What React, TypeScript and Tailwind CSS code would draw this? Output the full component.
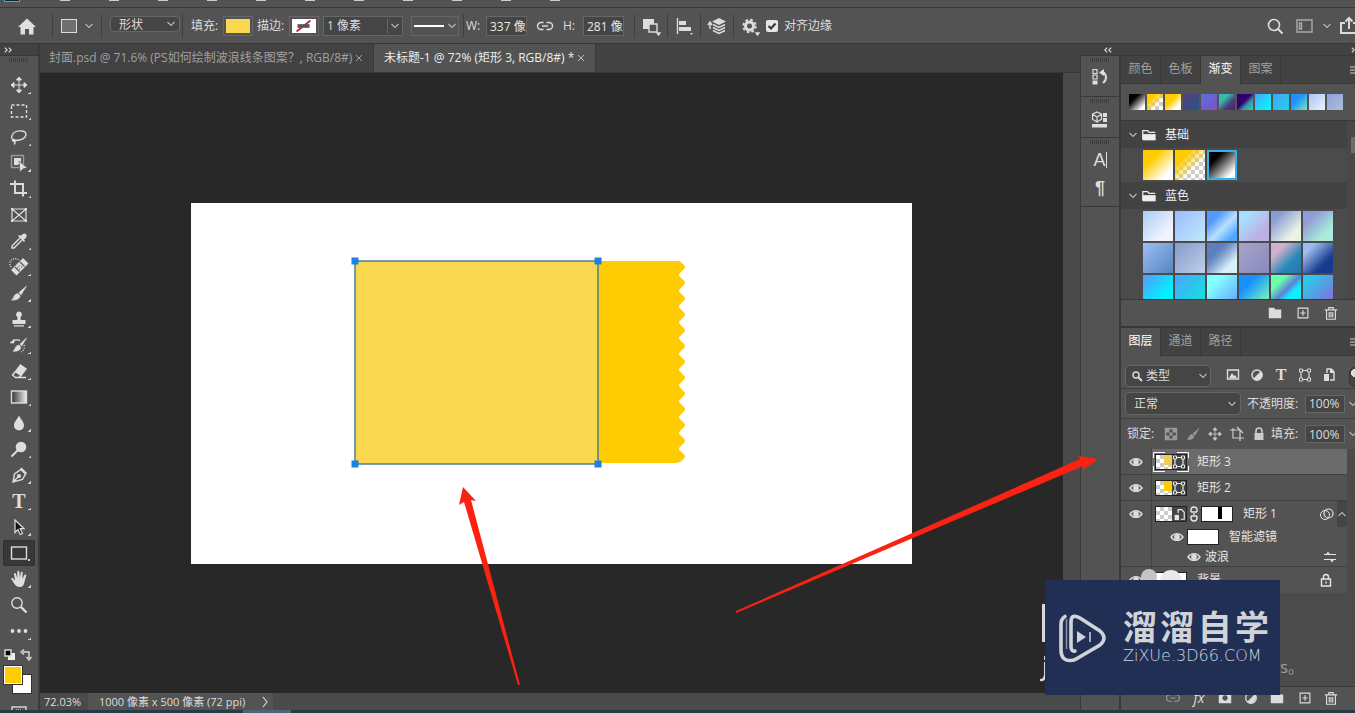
import type { ReactNode } from "react";
import clsx from "clsx";

type IconProps = { children: ReactNode; className?: string; box?: string };

function Icon({ children, className = "size-5", box = "0 0 20 20" }: IconProps) {
  return (
    <svg
      viewBox={box}
      className={clsx("shrink-0", className)}
      fill="none"
      stroke="currentColor"
      strokeWidth="1.4"
      aria-hidden="true"
    >
      {children}
    </svg>
  );
}

function Chevron({ className = "" }: { className?: string }) {
  return (
    <Icon box="0 0 8 8" className={clsx("pointer-events-none size-2 text-[#b8b8b8]", className)}>
      <path d="M.5 2 4 5.5 7.5 2" strokeWidth="1.1" />
    </Icon>
  );
}

function Grip() {
  return (
    <div className="mx-auto h-1 w-5 shrink-0 bg-[repeating-linear-gradient(90deg,#3e3e3e_0_1px,transparent_1px_2px)]" />
  );
}

function Divider() {
  return <div className="h-6 w-px shrink-0 bg-[#404040]" />;
}

const moveIcon = (
  <path
    d="M10 4v12M4 10h12M10 2 7.5 5h5zM10 18l-2.500-3h5zM2 10l3-2.500v5zM18 10l-3-2.500v5z"
    fill="currentColor"
    strokeWidth="1"
  />
);

const folderIcon = <path d="M2 3h6l1.500 2H16v10H2z" fill="currentColor" stroke="none" />;

const trashIcon = <path d="M2 5.500h14M6.500 5.500V3h5v2.500M4 6v10h10V6M7 8v6M9 8v6M11 8v6" strokeWidth="1.300" />;

const newIcon = <path d="M3.500 3.500h11v11h-11zM9 6v6M6 9h6" strokeWidth="1.300" />;

const tools: { name: string; icon: ReactNode; more?: boolean }[] = [
  { name: "移动工具", icon: moveIcon, more: true },
  { name: "矩形选框工具", icon: <rect x="2.500" y="4" width="15" height="12" strokeDasharray="3 2" />, more: true },
  {
    name: "套索工具",
    icon: (
      <path d="M6 13.500C3 13 2 11 3 8.500 4.500 5 9 3.500 13 4c4 .5 5 3 3 6-2 2.500-6 3.500-10 3.500zM6 13c-2-1-3 0-2 1s2 .5 2.500-.5M6 14c.5 1.500 0 2.500-1 3.500" />
    ),
    more: true,
  },
  {
    name: "对象选择工具",
    icon: (
      <>
        <rect x="2.500" y="2.500" width="12" height="12" strokeDasharray="1 1" />
        <path d="M5 5h7v4l-3 3H5z" fill="currentColor" stroke="none" />
        <path d="m10 8 8.500 7-4 .5-3.500 3.500z" fill="currentColor" stroke="#535353" strokeWidth=".6" />
      </>
    ),
    more: true,
  },
  { name: "裁剪工具", icon: <path d="M6 1.500V14h12M1 5h4m2 0h7v12.500" strokeWidth="1.900" />, more: true },
  {
    name: "图框工具",
    icon: (
      <>
        <path d="M3 4h14v12H3zM3 4l14 12M17 4 3 16" strokeWidth="1.200" />
        <path d="M2 3h2v2H2zM16 3h2v2h-2zM2 15h2v2H2zM16 15h2v2h-2z" fill="currentColor" stroke="none" />
      </>
    ),
  },
  {
    name: "吸管工具",
    icon: (
      <>
        <path d="m11 7-8 8v2h2l8-8" />
        <path d="m9 5 6 6 1-1-1-1.500c3-2 3-4 2-5.200s-3-1-5 1.700L10.500 4z" fill="currentColor" stroke="none" />
      </>
    ),
    more: true,
  },
  {
    name: "污点修复画笔工具",
    icon: (
      <>
        <path d="M2 10a4.500 4.500 0 0 1 8-6.500" strokeDasharray="1 1.300" />
        <path d="m14 2 4.500 4.500-11 11L3 13z" fill="currentColor" strokeLinejoin="round" />
        <path d="m11 5 4.500 4.500M6 10l4.500 4.500" stroke="#535353" strokeWidth="1.200" />
        <path d="M10.500 8.500v.8M12 10h.8M8.500 10.300h.8M10.300 12h.8" stroke="#535353" />
      </>
    ),
    more: true,
  },
  {
    name: "画笔工具",
    icon: (
      <path
        d="M17.500 3 10 9.500l2 2.500zM9 10.500l2.200 2.500c-.7 3-4 4.500-8.700 4 2.500-1 1.800-6 6.500-6.500z"
        fill="currentColor"
        stroke="currentColor"
        strokeWidth=".6"
      />
    ),
    more: true,
  },
  {
    name: "仿制图章工具",
    icon: (
      <path
        d="M10 2.500a3 3 0 0 1 2 5.200c-.8.800-.5 2.800 0 3.300h4.500v4h-13v-4H8c.5-.5.8-2.500 0-3.300a3 3 0 0 1 2-5.200zM5 16.200h10v1.300H5z"
        fill="currentColor"
        stroke="none"
      />
    ),
    more: true,
  },
  {
    name: "历史记录画笔工具",
    icon: (
      <>
        <path
          d="m17.500 3-6.500 6 1.700 2zM10 10l2 2.200c-.6 3-3.500 4.500-8 4 2.500-1 1.500-5.500 6-6.200zM1 8l4-3.500V8z"
          fill="currentColor"
          strokeWidth=".6"
        />
        <path d="M4 6c2-1.500 4-1.500 7-.5" />
        <path d="M15 10c1 3 0 5-3 7" strokeDasharray="1 1.500" />
      </>
    ),
    more: true,
  },
  {
    name: "橡皮擦工具",
    icon: (
      <>
        <path d="m11.500 4 5.500 4-5 6.500-5.500-4z" fill="currentColor" />
        <path d="m6.500 10.500-3 3.500 3 2.500h3.500l2-2M6 16.500h11" />
      </>
    ),
    more: true,
  },
  {
    name: "渐变工具",
    icon: (
      <>
        <defs>
          <linearGradient id="toolGradient">
            <stop stopColor="#333" />
            <stop offset="1" stopColor="#eee" />
          </linearGradient>
        </defs>
        <rect x="2.500" y="4" width="15" height="12" fill="url(#toolGradient)" />
      </>
    ),
    more: true,
  },
  {
    name: "模糊工具",
    icon: <path d="M10 2.500c2 4 5 6.500 5 10a5 5 0 0 1-10 0c0-3.500 3-6 5-10z" fill="currentColor" stroke="none" />,
    more: true,
  },
  {
    name: "减淡工具",
    icon: (
      <>
        <circle cx="12" cy="8" r="5.300" fill="currentColor" stroke="none" />
        <path d="m9 11-6.500 6.500" strokeWidth="2" />
      </>
    ),
    more: true,
  },
  {
    name: "钢笔工具",
    icon: (
      <>
        <path d="m12 4.500 4.500 4.500-3 5.500L4 17l1.500-8zM4 17l5-5" />
        <path d="m12.500 2.500 5.500 5.500-1.500 1.500L11 4z" fill="currentColor" stroke="none" />
        <circle cx="10" cy="11" r="1.300" fill="currentColor" />
      </>
    ),
    more: true,
  },
  { name: "横排文字工具", icon: "T", more: true },
  {
    name: "路径选择工具",
    icon: <path d="M6 3v12.500l3-3 2.200 5 2.300-1-2.300-4.800H15z" fill="#111" strokeWidth="1.200" />,
    more: true,
  },
  { name: "矩形工具", icon: <rect x="2.500" y="4" width="15" height="12" />, more: true },
  {
    name: "抓手工具",
    icon: (
      <path
        d="M2 9.500c1-1 2.300-.3 4 2L5 5c0-1.400 1.600-1.500 2 0l1.200 4.500L8.300 2.800c.1-1.300 1.800-1.300 2 0l.6 6.500.9-5.800c.3-1.300 1.900-1 1.900.3l-.3 6.200 2-4c.6-1.100 2.100-.5 1.800.7L15.700 12c-.5 4-2 6-5 6-4 0-5.500-3.500-8.700-8.500z"
        fill="currentColor"
        stroke="none"
      />
    ),
    more: true,
  },
  {
    name: "缩放工具",
    icon: (
      <>
        <circle cx="8" cy="8" r="5.200" />
        <path d="m12 12 5.500 5.500" strokeWidth="2.400" />
      </>
    ),
  },
  {
    name: "编辑工具栏",
    icon: (
      <>
        <circle cx="3.500" cy="10" r="1.900" fill="currentColor" stroke="none" />
        <circle cx="10" cy="10" r="1.900" fill="currentColor" stroke="none" />
        <circle cx="16.500" cy="10" r="1.900" fill="currentColor" stroke="none" />
      </>
    ),
    more: true,
  },
];

const recentSwatches = [
  "bg-[linear-gradient(135deg,#000_30%,#fff_85%)]",
  "bg-[linear-gradient(135deg,#fc0_30%,transparent_70%),conic-gradient(#ccc_25%,#fff_0_50%,#ccc_0_75%,#fff_0)] bg-[size:auto,8px_8px]",
  "bg-[linear-gradient(135deg,#fc0_40%,#fff_80%)]",
  "bg-[linear-gradient(135deg,#554080,#28557f)]",
  "bg-[linear-gradient(135deg,#5a6fe0,#8050c0)]",
  "bg-[linear-gradient(135deg,#35bcae_30%,#4d3a7a_65%,#502078)]",
  "bg-[linear-gradient(135deg,#30006c_45%,#3a8fa8_65%,#38d0b0)]",
  "bg-[linear-gradient(135deg,#4aa4ff,#0ff)]",
  "bg-[linear-gradient(135deg,#42a5f8,#20d0ea)]",
  "bg-[linear-gradient(135deg,#1e90ff_35%,#6fe8c0)]",
  "bg-[linear-gradient(135deg,#a8c6f4,#e8f2ff)]",
  "bg-[linear-gradient(135deg,#8f9fd8,#aebfda)]",
];

const basicSwatches = [
  "bg-[linear-gradient(135deg,#fc0_30%,#fff_80%)]",
  "bg-[linear-gradient(135deg,#fc0_25%,transparent_65%),conic-gradient(#ccc_25%,#fff_0_50%,#ccc_0_75%,#fff_0)] bg-[size:auto,8px_8px]",
  "border-2 border-[#30b5e8] bg-[linear-gradient(135deg,#000_25%,#fff_85%)]",
];

const blueSwatches = [
  "bg-[linear-gradient(135deg,#a9ccf4,#f0f2ff_75%)]",
  "bg-[linear-gradient(135deg,#9bbcff,#bfe9fb)]",
  "bg-[linear-gradient(135deg,#529aff_25%,#b8e0ff_55%,#52a8ff_85%)]",
  "bg-[linear-gradient(135deg,#a8dfff_20%,#bcb0e4_75%)]",
  "bg-[linear-gradient(135deg,#8a9cd4_20%,#e8f3e4_75%)]",
  "bg-[linear-gradient(135deg,#929cd6_25%,#a9ecdc_75%)]",
  "bg-[linear-gradient(135deg,#9fbef4,#5486c0)]",
  "bg-[linear-gradient(135deg,#8799cc,#bdd0e8)]",
  "bg-[linear-gradient(135deg,#5c7fc0_30%,#7e9acc_45%,#d8f0fa_75%)]",
  "bg-[linear-gradient(135deg,#a8a4c6,#8888c0)]",
  "bg-[linear-gradient(135deg,#d2b0cc_25%,#2688b8_65%,#2878a8)]",
  "bg-[linear-gradient(135deg,#9fbcee_20%,#173c8f_70%)]",
  "bg-[linear-gradient(135deg,#4ba4ff_10%,#00f2ff_70%)]",
  "bg-[linear-gradient(135deg,#4ba4ff,#1cd8e0_75%)]",
  "bg-[linear-gradient(135deg,#84ffff_25%,#60a0ff)]",
  "bg-[linear-gradient(135deg,#1690ff_30%,#71edc0_85%)]",
  "bg-[linear-gradient(135deg,#6dffac_25%,#6080d8_50%,#10edff_65%)]",
  "bg-[linear-gradient(135deg,#30c5ea_20%,#8070d8_90%)]",
];

const checker = "bg-[conic-gradient(#ccc_25%,#fff_0_50%,#ccc_0_75%,#fff_0)] bg-[size:8px_8px]";

function SelectBox({ label, value, className }: { label: string; value: string; className: string }) {
  return (
    <div className={clsx("relative flex shrink-0 items-center rounded-sm border border-[#666] bg-[#454545]", className)}>
      <select aria-label={label} className="size-full appearance-none bg-transparent pl-2 outline-none">
        <option>{value}</option>
      </select>
      <Chevron className="absolute right-1" />
    </div>
  );
}

function NumberBox({ label, value, className }: { label: string; value: string; className: string }) {
  return (
    <input
      aria-label={label}
      defaultValue={value}
      className={clsx("shrink-0 border border-[#666] bg-[#454545] pl-[3px] text-[#e8e8e8] outline-none", className)}
    />
  );
}

function OptionsBar() {
  return (
    <header className="flex h-9 shrink-0 items-center overflow-hidden border-b border-[#383838] pt-px">
      <button aria-label="主页" className="ml-[15px] mr-[13px] text-[#e0e0e0]">
        <Icon className="size-6" box="0 0 24 24">
          <path d="M3 13 12 4.500 21 13h-2.500v7.500H14V15h-4v5.500H5.500V13z" fill="currentColor" stroke="none" />
        </Icon>
      </button>
      <Divider />
      <button aria-label="工具预设" className="mx-2 flex w-8 items-center justify-between">
        <span className="h-3.5 w-4 border border-[#ddd] bg-[#707070]" />
        <Chevron />
      </button>
      <Divider />
      <SelectBox label="工具模式" value="形状" className="mb-1 ml-2 mr-0.5 h-4 w-[70px]" />
      <Divider />
      <span className="ml-2 w-8 shrink-0">填充:</span>
      <button aria-label="填充颜色" className="mr-1 h-5 w-[30px] shrink-0 border border-[#666] p-0.5">
        <span className="block size-full bg-[#f9d74f]" />
      </button>
      <span className="w-8 shrink-0">描边:</span>
      <button aria-label="描边颜色" className="h-5 w-[30px] shrink-0 border border-[#666] p-0.5">
        <Icon className="h-full w-full bg-white" box="0 0 26 14">
          <path d="M5 13 20 1" stroke="#c8202f" strokeWidth="2" />
          <path d="M6 5h13v4H6z" fill="#555" stroke="none" />
        </Icon>
      </button>
      <div className="ml-1 mr-2 flex h-5 w-20 shrink-0 items-center border border-[#666] bg-[#454545]">
        <input aria-label="描边宽度" defaultValue="1 像素" className="w-16 border-r border-[#666] pl-[3px] outline-none" />
        <Chevron className="mx-auto" />
      </div>
      <button aria-label="描边样式" className="mr-1 flex h-5 w-12 shrink-0 items-center justify-between border border-[#666] px-0.5">
        <span className="h-0.5 w-[30px] bg-white" />
        <Chevron />
      </button>
      <Divider />
      <span className="w-[22px] shrink-0 pl-0.5">W:</span>
      <NumberBox label="宽度" value="337 像素" className="h-5 w-[41px]" />
      <button aria-label="链接宽高" className="mx-2">
        <Icon className="size-5">
          <path d="M8.500 6.500H6a3.500 3.500 0 0 0 0 7h2.500M11.500 6.500H14a3.500 3.500 0 0 1 0 7h-2.500M7 10h6" />
        </Icon>
      </button>
      <span className="w-5 shrink-0">H:</span>
      <NumberBox label="高度" value="281 像素" className="mr-2.5 h-5 w-[41px]" />
      <Divider />
      <button aria-label="路径操作" className="mx-1.5">
        <Icon>
          <path d="M2 3h11v10H2z" fill="currentColor" stroke="none" />
          <path d="M8 8h8v8H8z" fill="#535353" />
          <path d="M16 17h3l-1.500 2z" fill="currentColor" />
        </Icon>
      </button>
      <Divider />
      <button aria-label="路径对齐方式" className="mx-1.5">
        <Icon>
          <path d="M3.500 2v16" />
          <path d="M5 5h7v4H5zM5 11h12v4H5zM16 17h3l-1.500 2z" fill="currentColor" stroke="none" />
        </Icon>
      </button>
      <Divider />
      <button aria-label="路径排列方式" className="mx-1.5">
        <Icon>
          <path d="M3 13V7M1 9l2-3 2 3" />
          <path d="m12 2 7 3.500L12 9 5 5.500z" fill="currentColor" stroke="none" />
          <path d="m6 8.500 6 3 6-3M6 11.500l6 3 6-3M6 14.500l6 3 6-3" />
        </Icon>
      </button>
      <Divider />
      <button aria-label="其他选项" className="ml-1.5 mr-1.5">
        <Icon>
          <circle cx="9.500" cy="10" r="4" strokeWidth="3" />
          <circle cx="9.500" cy="10" r="6.200" strokeWidth="2" strokeDasharray="2.600 2.270" />
          <path d="M16 17h3l-1.500 2z" fill="currentColor" />
        </Icon>
      </button>
      <label className="flex shrink-0 items-center gap-1.5">
        <span className="relative size-3">
          <input type="checkbox" defaultChecked className="block size-3 appearance-none rounded-xs bg-[#e6e6e6]" />
          <Icon box="0 0 12 12" className="pointer-events-none absolute inset-0 size-3 text-[#333]">
            <path d="m2.500 6 2.500 2.500 4.500-5" strokeWidth="2" />
          </Icon>
        </span>
        对齐边缘
      </label>
      <div className="ml-auto flex shrink-0 items-center">
        <button aria-label="搜索" className="mr-2.5">
          <Icon>
            <circle cx="9" cy="9" r="5.500" strokeWidth="1.600" />
            <path d="m13 13 4.500 4.500" strokeWidth="2" />
          </Icon>
        </button>
        <button aria-label="工作区" className="flex items-center gap-2">
          <Icon className="size-5 text-[#aaa]">
            <path d="M2 4h15v12H2zM4.500 7h2v6h-2z" />
          </Icon>
          <Chevron className="text-[#666]" />
        </button>
        <button aria-label="共享" className="-mr-1 ml-2 w-5">
          <Icon>
            <path d="M6 7H2v10h16V7h-4M10 13V2M6.500 5.500 10 2l3.500 3.500" strokeWidth="2" />
          </Icon>
        </button>
      </div>
    </header>
  );
}

function Toolbar() {
  return (
    <aside className="flex w-10 shrink-0 flex-col border-r-2 border-[#3a3a3a] bg-[#535353]">
      <button aria-label="展开工具栏" className="h-3 shrink-0 border-b border-[#383838] bg-[#424242] pl-1">
        <Icon box="0 0 10 10" className="size-2">
          <path d="m1 2 3 3-3 3M6 2l3 3-3 3" />
        </Icon>
      </button>
      <div className="flex h-4 shrink-0 items-start pt-0.5">
        <Grip />
      </div>
      {tools.map((tool) => (
        <button
          key={tool.name}
          aria-label={tool.name}
          className={clsx(
            "relative mx-[3px] flex h-[26px] shrink-0 items-center justify-center text-[#dedede]",
            tool.name === "矩形工具" && "rounded-xs border border-[#303030] bg-[#383838]"
          )}
        >
          {tool.icon === "T" ? (
            <span className="font-['Liberation_Serif',serif] text-xl font-bold">T</span>
          ) : (
            <Icon>{tool.icon}</Icon>
          )}
          {tool.more && (
            <span className="absolute bottom-1 right-1 size-[3px] bg-[linear-gradient(135deg,transparent_50%,#ccc_50%)]" />
          )}
        </button>
      ))}
      <div className="flex h-5 shrink-0 items-center justify-between px-1 pt-0.5">
        <Icon box="0 0 12 12" className="size-3">
          <path d="M4 4h7v7H4z" fill="#eee" stroke="none" />
          <path d="M1 1h6v6H1z" fill="#000" />
        </Icon>
        <Icon box="0 0 12 12" className="mr-0.5 size-3">
          <path d="M3 3h6v6M4 .5 1 3l3 2.500M6.500 8 9 11l2.500-3" />
        </Icon>
      </div>
      <div className="relative mt-0.5 h-8 shrink-0">
        <button aria-label="背景色" className="absolute left-3 top-2 size-5 border border-[#333] bg-white" />
        <button aria-label="前景色" className="absolute left-1 top-0 size-[18px] border border-white bg-[#fc0] outline outline-[#333]" />
      </div>
      <div className="mt-2 flex justify-center">
        <Icon className="h-3 w-4" box="0 0 16 12">
          <rect x="1" y="1" width="14" height="11" />
          <path d="M5 4h6" strokeDasharray="1 1" />
        </Icon>
      </div>
    </aside>
  );
}

// pinking-shear edge of the big shape, one tooth per 15.8px
const teeth = Array.from({ length: 13 }, (_, i) => {
  const y = 64 + i * 15.8;
  return i < 12
    ? `L493 ${y - 2} Q495 ${y} 493 ${y + 2} L489 ${y + 6} Q487 ${y + 7.9} 489 ${y + 9.8}`
    : `L493 ${y - 2} Q495 ${y} 493 ${y + 2} L490 ${y + 5} Q488 260 484 260`;
}).join(" ");

function Workspace() {
  return (
    <main className="flex min-w-0 flex-1 flex-col bg-[#4a4a4a]">
      <div role="tablist" className="flex h-[29px] shrink-0 overflow-hidden border-b border-[#383838] bg-[#424242] pl-px">
        <div className="flex w-[333px] shrink-0 items-center whitespace-nowrap border-r border-[#383838] pl-2 text-[#a0a0a0]">
          <button role="tab">封面.psd @ 71.6% (PS如何绘制波浪线条图案？, RGB/8#)</button>
          <button aria-label="关闭封面" className="ml-auto mr-2.5">
            <Icon box="0 0 8 8" className="size-2">
              <path d="m1 1 6 6M7 1 1 7" strokeWidth="1" />
            </Icon>
          </button>
        </div>
        <div className="flex w-[222px] shrink-0 items-center whitespace-nowrap border-r border-[#383838] bg-[#535353] pl-2.5 text-[#eee]">
          <button role="tab">未标题-1 @ 72% (矩形 3, RGB/8#) *</button>
          <button aria-label="关闭未标题-1" className="ml-auto mr-2.5 text-[#bbb]">
            <Icon box="0 0 8 8" className="size-2">
              <path d="m1 1 6 6M7 1 1 7" strokeWidth="1" />
            </Icon>
          </button>
        </div>
      </div>
      <div className="mr-[17px] flex min-h-0 flex-1 items-center justify-center overflow-hidden bg-[#282828]">
        <svg viewBox="0 0 721 361" className="h-[361px] w-[721px] shrink-0 bg-white" role="img" aria-label="画布">
          <path d={`M164 58 H487 Q489 58 491 60 ${teeth} H164 Z`} fill="#ffcc03" />
          <rect x="164" y="58" width="243" height="203" fill="#f9d74f" stroke="#4c7d92" strokeWidth="1.500" />
          <path
            d="M160.500 54.500h7v7h-7zM403.500 54.500h7v7h-7zM160.500 257.500h7v7h-7zM403.500 257.500h7v7h-7z"
            fill="#1b82e2"
          />
        </svg>
      </div>
      <footer className="flex h-[17px] shrink-0 items-center bg-[#4a4a4a] text-[11px] leading-4 text-[#ddd]">
        <span className="w-12 pl-1">72.03%</span>
        <span className="flex h-full items-center gap-4 bg-[#535353] pl-[11px] pr-1">
          1000 像素 x 500 像素 (72 ppi)
          <Icon box="0 0 8 12" className="h-3 w-2">
            <path d="m2 1 4 5-4 5" strokeWidth="1.100" />
          </Icon>
        </span>
      </footer>
    </main>
  );
}

function Dock() {
  return (
    <div className="flex min-h-0 w-10 shrink-0 flex-col border-x border-[#3a3a3a] bg-[#535353] pt-0.5 text-[#dedede]">
      <div className="flex h-[39px] shrink-0 flex-col border-b border-[#383838] pb-1">
        <Grip />
        <button aria-label="历史记录" className="m-auto">
          <Icon>
            <path d="M3 2.500h4v4H3zM3 8h4v4H3z" strokeWidth="1.200" />
            <path d="M2.500 13.500h5v4h-5zM9 5.500 14 2v7z" fill="currentColor" stroke="none" />
            <path d="M13 5c4 3 4 8 0 11" strokeWidth="2" />
          </Icon>
        </button>
      </div>
      <div className="flex h-[41px] shrink-0 flex-col border-b border-[#383838] pt-0.5">
        <Grip />
        <button aria-label="属性" className="m-auto">
          <Icon>
            <path d="m7 2 4.500 2.200v5L7 12 2.500 9.200v-5zM2.500 4.200 7 7l4.500-2.800M7 7v5" strokeWidth="1.200" />
            <path d="M13 3h4v4h-4zM13 8h4v4h-4zM2 14h15v3.500H2z" fill="currentColor" stroke="none" />
          </Icon>
        </button>
      </div>
      <div className="flex h-[69px] shrink-0 flex-col items-center border-b border-[#383838] pt-0.5">
        <Grip />
        <button aria-label="字符" className="mt-0.5 flex h-7 items-center font-['Liberation_Sans',sans-serif] text-lg">
          A<span className="h-4 w-px bg-[#dedede]" />
        </button>
        <button aria-label="段落" className="h-7 font-['Liberation_Sans',sans-serif] text-lg font-bold leading-7">
          ¶
        </button>
      </div>
    </div>
  );
}

function PanelTabs({ tabs, active }: { tabs: string[]; active: string }) {
  return (
    <div role="tablist" className="flex h-7 shrink-0 border-b border-[#383838] bg-[#424242]">
      {tabs.map((tab) => (
        <button
          key={tab}
          role="tab"
          aria-selected={tab === active}
          className={clsx(
            "-mb-px h-7 w-10 shrink-0 border-r border-[#383838] pb-0.5",
            tab === active ? "bg-[#535353] text-white" : "border-b text-[#a0a0a0]"
          )}
        >
          {tab}
        </button>
      ))}
      <button aria-label="面板菜单" className="ml-auto -mr-1 pr-px text-[#ccc]">
        <Icon box="0 0 8 8" className="size-2">
          <path d="M0 1h8M0 4h8M0 7h8" strokeWidth="1" />
        </Icon>
      </button>
    </div>
  );
}

function GroupHeader({ title }: { title: string }) {
  return (
    <button className="flex h-[27px] w-full shrink-0 items-center bg-[#424242] pl-2 text-[#eee]">
      <Chevron className="mr-1" />
      <Icon box="0 0 18 18" className="mr-2 size-4">
        <path d="M2 14V4h5.500L9 6h7" />
        <path d="M2 8h14.500v7H2z" fill="currentColor" stroke="none" />
      </Icon>
      {title}
    </button>
  );
}

function SwatchGrid({ items }: { items: string[] }) {
  return (
    <div className="grid grid-cols-[repeat(6,30px)] gap-0.5 py-0.5 pl-[22px]">
      {items.map((item) => (
        <button key={item} aria-label="渐变预设" className={clsx("size-[30px]", item)} />
      ))}
    </div>
  );
}

function GradientsPanel() {
  return (
    <section className="flex shrink-0 flex-col">
      <PanelTabs tabs={["颜色", "色板", "渐变", "图案"]} active="渐变" />
      <div className="flex h-9 shrink-0 items-center gap-0.5 pl-2">
        {recentSwatches.map((item) => (
          <button key={item} aria-label="最近使用的渐变" className={clsx("size-4 shrink-0", item)} />
        ))}
      </div>
      <div className="flex h-[180px] shrink-0 overflow-hidden border-y border-[#383838] bg-[#4b4b4b]">
        <div className="flex-1">
          <GroupHeader title="基础" />
          <SwatchGrid items={basicSwatches} />
          <GroupHeader title="蓝色" />
          <SwatchGrid items={blueSwatches} />
        </div>
        <div className="flex w-2 flex-col items-end bg-[#484848] pt-4">
          <div className="h-4 w-1 bg-[#6c6c6c]" />
        </div>
      </div>
      <div className="flex h-[26px] items-center justify-end gap-3 pr-4">
        <button aria-label="新建组">
          <Icon box="0 0 18 18" className="size-4">{folderIcon}</Icon>
        </button>
        <button aria-label="新建渐变">
          <Icon box="0 0 18 18" className="size-4">{newIcon}</Icon>
        </button>
        <button aria-label="删除渐变">
          <Icon box="0 0 18 18" className="size-4">{trashIcon}</Icon>
        </button>
      </div>
    </section>
  );
}

function Eye() {
  return (
    <Icon box="0 0 14 14" className="size-3.5 text-[#ddd]">
      <path d="M1 7c3-4.500 9-4.500 12 0-3 4.500-9 4.500-12 0z" />
      <circle cx="7" cy="7" r="2.200" fill="currentColor" />
    </Icon>
  );
}

const shapeBox = (
  <>
    <path d="M4 3.500h8v9H4z" strokeWidth="1.200" />
    <path d="M2.500 2h3v3h-3zM10.500 2h3v3h-3zM2.500 11h3v3h-3zM10.500 11h3v3h-3z" fill="#454545" strokeWidth="1" />
  </>
);

function ShapeThumb({ fill, selected }: { fill: string; selected?: boolean }) {
  return (
    <span className="relative flex h-4 w-8 shrink-0 border border-[#222]">
      <span className={clsx("relative h-full w-4", checker)}>
        <span className={clsx("absolute right-0 top-0 h-2.5 w-2", fill)} />
      </span>
      <Icon box="1 1 14 14" className="h-full w-3.5 bg-[#454545]">
        {shapeBox}
      </Icon>
      {selected && (
        <svg viewBox="0 0 36 20" className="absolute -left-[3px] -top-[3px] h-5 w-9" fill="none" stroke="#fff">
          <path d="M.5 6V.5H12M24 .5h11.500V6M35.500 14v5.500H24M12 19.500H.5V14" />
        </svg>
      )}
    </span>
  );
}

function LayersPanel() {
  return (
    <section className="flex min-h-0 flex-1 flex-col border-t-2 border-[#383838]">
      <PanelTabs tabs={["图层", "通道", "路径"]} active="图层" />
      <div className="flex h-[33px] shrink-0 items-end overflow-hidden border-b border-[#404040] pb-px pl-1">
        <div className="relative flex items-center">
          <Icon box="0 0 12 12" className="pointer-events-none absolute left-1.5 size-3">
            <circle cx="5" cy="5" r="3" />
            <path d="m7.500 7.500 3.500 3.500" strokeWidth="2" />
          </Icon>
          <select
            aria-label="图层过滤"
            className="h-[22px] w-[86px] appearance-none rounded-sm border border-[#666] bg-[#454545] pl-5 outline-none"
          >
            <option>类型</option>
          </select>
          <Chevron className="absolute right-1" />
        </div>
        <div className="ml-3.5 flex h-6 items-center gap-2 text-[#ddd]">
          <Icon box="0 0 16 16" className="size-4">
            <path d="M2.500 3h11v9h-11z" />
            <path d="m4 11 3-5 2 3 1-1 2 3z" fill="currentColor" stroke="none" />
          </Icon>
          <Icon box="0 0 16 16" className="size-4">
            <circle cx="8" cy="8" r="5" />
            <path d="M12 4a5.500 5.500 0 0 1-8 8z" fill="currentColor" stroke="none" />
          </Icon>
          <span className="w-4 text-center font-['Liberation_Serif',serif] text-base font-bold">T</span>
          <Icon box="0 0 16 16" className="size-4">{shapeBox}</Icon>
          <Icon box="0 0 16 16" className="size-4">
            <path d="M6 6V2h4l3 3v8H9" />
            <path d="M3 7h5v7H3zM9 2h2l2 2v2H9z" fill="currentColor" stroke="none" />
          </Icon>
        </div>
        <span className="ml-3 h-5 w-3 shrink-0 rounded-full border border-[#333] bg-[radial-gradient(circle_at_5px_5px,#ddd_4px,#454545_4px)]" />
      </div>
      <div className="flex h-[30px] shrink-0 items-center overflow-hidden border-b border-[#404040] pl-1">
        <SelectBox label="混合模式" value="正常" className="h-[23px] w-[116px]" />
        <label htmlFor="opacity" className="ml-1.5 w-[58px] shrink-0 whitespace-nowrap">不透明度:</label>
        <input id="opacity" defaultValue="100%" className="h-[18px] w-10 shrink-0 border border-[#666] bg-[#454545] pl-[3px] outline-none" />
        <Chevron className="ml-1" />
      </div>
      <div className="flex h-[30px] shrink-0 items-center overflow-hidden pl-1.5">
        <span className="w-9 shrink-0">锁定:</span>
        <div className="flex items-center gap-1.5 text-[#ccc]">
          <Icon box="0 0 16 16" className="size-4 text-[#999]">
            <path d="M2.500 2.500h11v11h-11z" />
            <path d="M3 3h3.500v3.500H3zM9.500 3H13v3.500H9.500zM6.500 6.500h3v3h-3zM3 9.500h3.500V13H3zM9.500 9.500H13V13H9.500z" fill="currentColor" stroke="none" />
          </Icon>
          <Icon className="size-4 text-[#999]">{tools[8].icon}</Icon>
          <Icon className="size-4">{moveIcon}</Icon>
          <Icon box="0 0 16 16" className="size-4">
            <path d="M1 4h10v11M4 2v10h11M8 1l3 3 3 3" strokeWidth="1.200" />
          </Icon>
          <Icon box="0 0 16 16" className="size-4">
            <path d="M5 8V5a3 3 0 0 1 6 0v3" strokeWidth="1.600" />
            <path d="M3.500 7h9v7h-9z" fill="currentColor" stroke="none" />
          </Icon>
        </div>
        <label htmlFor="fill" className="ml-1 w-8 shrink-0 whitespace-nowrap">填充:</label>
        <input id="fill" defaultValue="100%" className="ml-auto h-[18px] w-10 shrink-0 border border-[#666] bg-[#454545] pl-[3px] outline-none" />
        <Chevron className="ml-1 -mr-0.5 shrink-0" />
      </div>

      <ul className="min-h-0 flex-1 overflow-hidden bg-[#4b4b4b] pr-2 text-[#e6e6e6]">
        <li className="flex h-[26px] border-b border-[#404040] bg-[#535353]">
          <button aria-label="隐藏矩形 3" className="flex w-[31px] items-center justify-center border-r border-[#404040]"><Eye /></button>
          <span className="flex flex-1 items-center gap-2.5 bg-[#6b6b6b] pl-[3px]"><ShapeThumb fill="bg-[#f0cf50]" selected />矩形 3</span>
        </li>
        <li className="flex h-[26px] border-b border-[#404040] bg-[#535353]">
          <button aria-label="隐藏矩形 2" className="flex w-[31px] items-center justify-center border-r border-[#404040]"><Eye /></button>
          <span className="flex flex-1 items-center gap-2.5 pl-[3px]"><ShapeThumb fill="bg-[#fc0]" />矩形 2</span>
        </li>
        <li className="flex h-[66px] border-b border-[#404040] bg-[#535353]">
          <div className="w-[31px] border-r border-[#404040]">
            <button aria-label="隐藏矩形 1" className="flex h-[26px] w-full items-center justify-center"><Eye /></button>
          </div>
          <div className="flex-1">
            <div className="flex h-[26px] items-center pl-[3px]">
              <span className={clsx("flex h-4 w-8 justify-end border border-[#222]", checker)}>
                <Icon box="0 0 16 16" className="h-full w-3.5 bg-[#454545]">
                  <path d="M7 7V3h4l3 3v8h-4" />
                  <path d="M3 9h5v6H3z" fill="currentColor" stroke="none" />
                </Icon>
              </span>
              <Icon box="0 0 14 16" className="h-4 w-3.5">
                <path d="M4 6V4a3 3 0 0 1 6 0v2M4 10v2a3 3 0 0 0 6 0v-2M7 5v6M4 6h2M8 6h2M4 10h2M8 10h2" />
              </Icon>
              <span className="mr-2.5 flex h-4 w-8 justify-center border border-[#222] bg-white">
                <span className="ml-1.5 h-3 w-1 bg-black" />
              </span>
              矩形 1
              <Icon box="0 0 16 16" className="ml-auto mr-0.5 size-4">
                <circle cx="6" cy="9" r="4.500" strokeWidth="1" />
                <circle cx="9.500" cy="7.500" r="4.500" strokeWidth="1.200" />
              </Icon>
              <span className="flex h-full w-2.5 items-center justify-center bg-[#454545]">
                <Chevron className="rotate-180" />
              </span>
            </div>
            <div className="flex h-5 items-center pl-[18px]">
              <Eye />
              <span className="ml-[3px] mr-2.5 h-4 w-8 border border-[#222] bg-white" />
              智能滤镜
            </div>
            <div className="flex h-[19px] items-center pl-[35px] pr-2.5">
              <Eye />
              <span className="ml-1">波浪</span>
              <Icon box="0 0 14 14" className="ml-auto size-3.5">
                <path d="M1 4.500h12M1 9.500h12" strokeWidth="1" />
                <path d="m5 1.500 2 3H3zM9 12.500l-2-3h4z" fill="currentColor" stroke="none" />
              </Icon>
            </div>
          </div>
        </li>
        <li className="flex h-[26px] bg-[#535353]">
          <button aria-label="隐藏背景" className="flex w-[31px] items-center justify-center border-r border-[#404040]"><Eye /></button>
          <span className="flex flex-1 items-center gap-2.5 pl-[3px] pr-3.5">
            <span className="h-4 w-8 border border-[#222] bg-white" />
            背景
            <Icon box="0 0 14 14" className="ml-auto size-3.5">
              <path d="M2.500 6h9v7h-9zM4.500 6V4a2.500 2.500 0 0 1 5 0v2M7 8.500v2" />
            </Icon>
          </span>
        </li>
      </ul>
      <div className="flex h-6 shrink-0 items-center justify-end gap-2.5 border-t border-[#383838] pb-0.5 pr-4">
        <button aria-label="链接图层" className="text-[#999]">
          <Icon className="size-4">
            <path d="M8.500 6H6a4 4 0 0 0 0 8h2.500M11.500 6H14a4 4 0 0 1 0 8h-2.500M7 10h6" />
          </Icon>
        </button>
        <button aria-label="图层样式" className="w-4 text-sm italic">fx</button>
        <button aria-label="添加蒙版">
          <Icon box="0 0 18 18" className="size-4">
            <path d="M2 3h14v12H2zm7 3a3 3 0 1 0 .1 0z" fill="currentColor" fillRule="evenodd" stroke="none" />
          </Icon>
        </button>
        <button aria-label="调整图层">
          <Icon box="0 0 18 18" className="size-4">
            <circle cx="9" cy="9" r="6" />
            <path d="M13.500 4.500a6.500 6.500 0 0 1-9 9z" fill="currentColor" stroke="none" />
          </Icon>
        </button>
        <button aria-label="新建图层组">
          <Icon box="0 0 18 18" className="size-4">{folderIcon}</Icon>
        </button>
        <button aria-label="新建图层" className="ml-0.5">
          <Icon box="0 0 18 18" className="size-4">{newIcon}</Icon>
        </button>
        <button aria-label="删除图层">
          <Icon box="0 0 18 18" className="size-4">{trashIcon}</Icon>
        </button>
      </div>
    </section>
  );
}

function SideDock() {
  return (
    <aside className="flex w-[275px] shrink-0 flex-col">
      <div className="flex h-3 shrink-0 items-center border-b border-[#383838] bg-[#424242] pl-6 text-[#ddd]">
        <Icon box="0 0 10 10" className="size-2">
          <path d="M4 2 1 5l3 3M9 2 6 5l3 3" />
        </Icon>
        <Icon box="0 0 10 10" className="ml-auto -mr-1 size-2">
          <path d="m1 2 3 3-3 3M6 2l3 3-3 3" />
        </Icon>
      </div>
      <div className="flex min-h-0 flex-1">
        <Dock />
        <div className="flex min-w-0 flex-1 flex-col overflow-hidden border-l border-[#3a3a3a] bg-[#535353]">
          <GradientsPanel />
          <LayersPanel />
        </div>
      </div>
    </aside>
  );
}

// red pointers drawn across the workspace
function Arrows() {
  return (
    <svg viewBox="0 0 1355 713" className="pointer-events-none absolute left-0 top-0 h-[713px] w-[1355px]" aria-hidden="true">
      <path d="M463 487 476 501 471 500 520 685 518 685 464 502 459 505z" fill="#fb2212" />
      <path d="M1098 459 1083 470 1083 466 736 613 736 611 1080 459 1079 456z" fill="#fb2212" />
    </svg>
  );
}

function Watermark() {
  return (
    <div className="pointer-events-none absolute bottom-[18px] right-[75px] h-[115px] w-[235px]">
      <svg viewBox="0 0 60 16" className="absolute -top-3 left-[96px] h-4 w-[60px]" aria-hidden="true">
        <circle cx="8" cy="9" r="8" fill="#c4c4c4" />
        <circle cx="30" cy="13" r="11" fill="#e9e9e9" />
      </svg>
      <svg viewBox="0 0 6 84" className="absolute -left-[5px] top-6 h-[84px] w-1.5" fill="#d8d8d8" aria-hidden="true">
        <path d="M2 0h4v38H2zM4 52h2v4H4zM6 58v14q0 6-6 5v-2q4 0 4-5V58z" />
      </svg>
      <span className="absolute -right-6 bottom-4 text-base text-[#a0a0a0]">ys。</span>
      <div className="relative flex size-full items-center gap-4 bg-[#222f55] pl-3.5 text-[#d0d3d8]">
        <svg viewBox="0 0 48 50" className="h-[50px] w-12 shrink-0" fill="none" stroke="currentColor" strokeWidth="3.600" aria-hidden="true">
          <path d="M6 3.500Q2 6 2 11v26Q2 48 12 47.500q3 0 6-2L41 32q8-7 0-14L21 5Q12 0 12 9v24q0 6 4 5" strokeLinecap="round" />
          <path d="M7.500 6v30" strokeWidth="1.500" stroke="#8d93a3" />
          <path d="m18 18 9 6-9 6z" fill="currentColor" stroke="none" />
          <path d="M31 19v10" strokeWidth="1.500" />
        </svg>
        <div className="w-[146px] pb-1">
          <div className="flex justify-between font-['Liberation_Sans','Noto_Sans_CJK_SC',sans-serif] text-[34px] font-bold leading-10">
            <span>溜</span>
            <span>溜</span>
            <span>自</span>
            <span>学</span>
          </div>
          <div className="whitespace-nowrap font-['DejaVu_Sans',sans-serif] text-base font-extralight leading-4">ZiXUe.3D66.COM</div>
        </div>
      </div>
    </div>
  );
}

export default function App() {
  return (
    <div className="relative flex h-screen flex-col overflow-hidden bg-[#535353] font-['Open_Sans','Noto_Sans_CJK_SC',sans-serif] text-xs text-[#dcdcdc]">
      <div className="flex h-2 shrink-0 items-start border-b border-[#383838]">
        <span className="ml-1 h-0.5 w-4 shrink-0 border-x border-b border-[#29b6e8] bg-[#0b2838]" />
        <div className="ml-10 flex gap-[39px]">
          {["文件", "编辑", "图像", "图层", "文字", "选择", "滤镜", "3D", "视图", "窗口", "帮助"].map((menu) => (
            <button key={menu} aria-label={menu} className="h-px w-2.5 bg-[#ccc]" />
          ))}
        </div>
      </div>
      <OptionsBar />
      <div className="flex min-h-0 flex-1">
        <Toolbar />
        <Workspace />
        <SideDock />
      </div>
      <div className="h-[3px] shrink-0 bg-[#263a47] pl-[243px]">
        <div className="h-full w-12 bg-[#4d6675]" />
      </div>
      <Watermark />
      <Arrows />
    </div>
  );
}
